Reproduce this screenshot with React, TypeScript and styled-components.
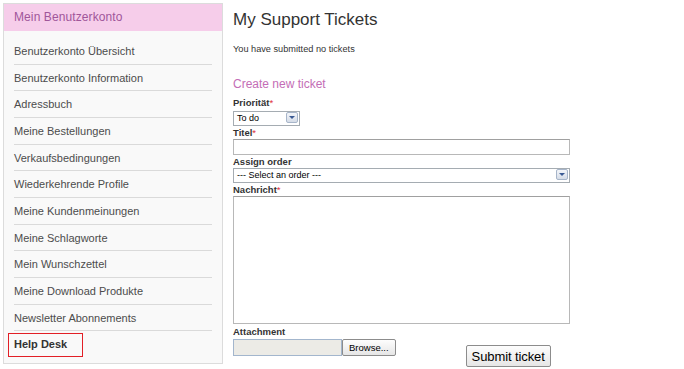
import React from "react";
import styled, { createGlobalStyle } from "styled-components";

const Global = createGlobalStyle`
  html, body { margin: 0; padding: 0; background: #fff; }
  body { font-family: "Liberation Sans", Arial, sans-serif; color: #333; }
  * { box-sizing: border-box; }
`;

const Page = styled.div`
  display: flex;
  align-items: flex-start;
  padding: 3px 0 0 3px;
  gap: 10px;
  width: 684px;
  height: 369px;
  overflow: hidden;
`;

const Sidebar = styled.div`
  width: 220px;
  height: 361px;
  border: 1px solid #dcdcdc;
  background: #f9f9f9;
  display: flex;
  flex-direction: column;
`;

const SideHeader = styled.div`
  height: 27px;
  background: #f6cdea;
  color: #a0569a;
  font-size: 12px;
  letter-spacing: 0.1px;
  line-height: 27px;
  padding-left: 10px;
`;

const Nav = styled.ul`
  list-style: none;
  margin: 0;
  padding: 7px 10px 0 10px;
`;

const NavItem = styled.li<{ $active?: boolean }>`
  height: 26.67px;
  line-height: 26px;
  font-size: 11px;
  color: #4c4c4c;
  border-bottom: ${(p) => (p.$active ? "none" : "1px solid #dadada")};
  white-space: nowrap;
`;

const ActiveBox = styled.span`
  display: inline-block;
  margin: 2px 0 0 -6px;
  padding: 0 5px;
  width: 75px;
  height: 24px;
  line-height: 21px;
  border: 1px solid #e21f26;
  font-weight: bold;
  color: #333;
`;

const Main = styled.div`
  display: flex;
  flex-direction: column;
  width: 340px;
  padding-top: 6px;
`;

const Title = styled.h1`
  margin: 0;
  font-size: 17px;
  font-weight: normal;
  color: #333;
  line-height: 21px;
`;

const Note = styled.p`
  margin: 13px 0 0 0;
  font-size: 9.2px;
  color: #333;
  line-height: 12px;
`;

const SubTitle = styled.h2`
  margin: 21px 0 4px 0;
  font-size: 12px;
  font-weight: normal;
  color: #c46db6;
  line-height: 16px;
`;

const Label = styled.label<{ $after?: number }>`
  display: block;
  font-size: 9.5px;
  font-weight: bold;
  color: #333;
  line-height: 12px;
  margin: 1px 0 ${(p) => p.$after ?? 1}px 0;
`;

const Req = styled.span`
  color: #e0303a;
  font-weight: normal;
`;

const SelectBox = styled.div<{ $w: number; $h: number }>`
  position: relative;
  width: ${(p) => p.$w}px;
  height: ${(p) => p.$h}px;
  border: 1px solid #a5acb2;
  background: #fff;
  font-size: 9px;
  line-height: ${(p) => p.$h - 2}px;
  padding-left: 3px;
  color: #000;
`;

const Arrow = styled.span`
  position: absolute;
  right: 1px;
  top: 0px;
  width: 12px;
  height: 11px;
  border: 1px solid #a7b5c9;
  border-radius: 2px;
  background: linear-gradient(#f3f5f9, #d5dce7);
  display: flex;
  align-items: center;
  justify-content: center;
`;

const TextInput = styled.div`
  width: 337px;
  height: 16px;
  border: 1px solid #b8b8b8;
  border-top-color: #a0a0a0;
  background: #fff;
`;

const TextArea = styled.div`
  width: 337px;
  height: 128px;
  border: 1px solid #b8b8b8;
  border-top-color: #a0a0a0;
  background: #fff;
`;

const BottomRow = styled.div`
  display: flex;
  align-items: flex-start;
  margin-top: 1px;
`;

const FileGroup = styled.div`
  display: flex;
  flex-direction: column;
`;

const FileRow = styled.div`
  display: flex;
`;

const FileField = styled.div`
  width: 109px;
  height: 17px;
  background: #ecebe6;
  border: 1px solid #a3b6cd;
`;

const Btn = styled.button<{ $big?: boolean }>`
  font-family: "Liberation Sans", Arial, sans-serif;
  font-size: ${(p) => (p.$big ? "13px" : "9.5px")};
  height: ${(p) => (p.$big ? "22px" : "17px")};
  padding: 0 ${(p) => (p.$big ? "5px" : "6px")};
  border: 1px solid #8c8c8c;
  border-radius: 2px;
  background: linear-gradient(#fdfdfd, #e6e6e6);
  color: #000;
  letter-spacing: ${(p) => (p.$big ? "-0.1px" : "0")};
`;

const SubmitWrap = styled.div`
  margin: 20px 0 0 70px;
`;

const items = [
  "Benutzerkonto Übersicht",
  "Benutzerkonto Information",
  "Adressbuch",
  "Meine Bestellungen",
  "Verkaufsbedingungen",
  "Wiederkehrende Profile",
  "Meine Kundenmeinungen",
  "Meine Schlagworte",
  "Mein Wunschzettel",
  "Meine Download Produkte",
  "Newsletter Abonnements",
];

const ArrowIcon = () => (
  <svg width="6" height="3" viewBox="0 0 6 3">
    <path d="M0 0h6L3 3z" fill="#3b5a93" />
  </svg>
);

export default function App() {
  return (
    <>
      <Global />
      <Page>
        <Sidebar>
          <SideHeader>Mein Benutzerkonto</SideHeader>
          <Nav>
            {items.map((t) => (
              <NavItem key={t}>{t}</NavItem>
            ))}
            <NavItem $active>
              <ActiveBox>Help Desk</ActiveBox>
            </NavItem>
          </Nav>
        </Sidebar>
        <Main>
          <Title>My Support Tickets</Title>
          <Note>You have submitted no tickets</Note>
          <SubTitle>Create new ticket</SubTitle>
          <Label $after={2}>
            Priorität<Req>*</Req>
          </Label>
          <SelectBox $w={67} $h={15}>
            To do
            <Arrow>
              <ArrowIcon />
            </Arrow>
          </SelectBox>
          <Label $after={0}>
            Titel<Req>*</Req>
          </Label>
          <TextInput />
          <Label $after={0}>Assign order</Label>
          <SelectBox $w={337} $h={15}>
            --- Select an order ---
            <Arrow>
              <ArrowIcon />
            </Arrow>
          </SelectBox>
          <Label $after={0}>
            Nachricht<Req>*</Req>
          </Label>
          <TextArea />
          <BottomRow>
            <FileGroup>
              <Label>Attachment</Label>
              <FileRow>
                <FileField />
                <Btn>Browse...</Btn>
              </FileRow>
            </FileGroup>
            <SubmitWrap>
              <Btn $big>Submit ticket</Btn>
            </SubmitWrap>
          </BottomRow>
        </Main>
      </Page>
    </>
  );
}
